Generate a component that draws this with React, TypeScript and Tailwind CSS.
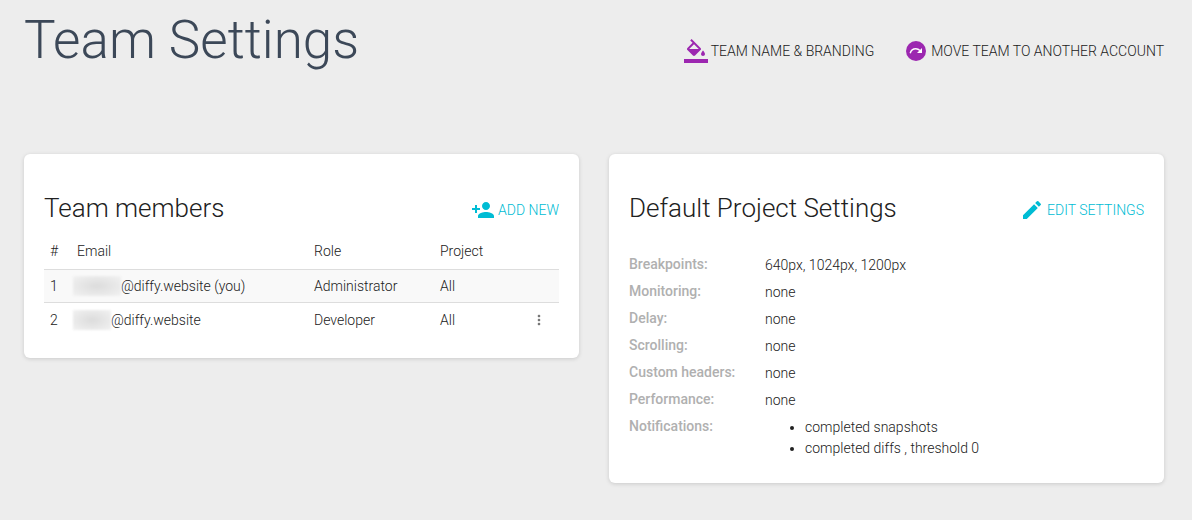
import type { ReactNode } from "react";
import { MdEdit, MdMoreVert, MdPersonAdd } from "react-icons/md";

type Member = { id: number; hidden: string; email: string; role: string; project: string; editable: boolean };

const members: Member[] = [
  { id: 1, hidden: "w-12", email: "@diffy.website (you)", role: "Administrator", project: "All", editable: false },
  { id: 2, hidden: "w-[38px]", email: "@diffy.website", role: "Developer", project: "All", editable: true },
];

const settings = [
  { label: "Breakpoints:", value: "640px, 1024px, 1200px" },
  { label: "Monitoring:", value: "none" },
  { label: "Delay:", value: "none" },
  { label: "Scrolling:", value: "none" },
  { label: "Custom headers:", value: "none" },
  { label: "Performance:", value: "none" },
];

const notifications = ["completed snapshots", "completed diffs , threshold 0"];

function FillIcon() {
  return (
    <svg viewBox="0 0 24 24" className="size-6 shrink-0 fill-[#9c27b0]" aria-hidden="true">
      <path d="M16.56 8.94L7.62 0 6.21 1.41l2.38 2.38-5.15 5.15c-.59.59-.59 1.54 0 2.12l5.5 5.5c.29.29.68.44 1.06.44s.77-.15 1.06-.44l5.5-5.5c.59-.58.59-1.53 0-2.12zM5.21 10L10 5.21 14.79 10H5.21zM19 11.5s-2 2.17-2 3.5c0 1.1.9 2 2 2s2-.9 2-2c0-1.33-2-3.5-2-3.5z" />
      <path d="M0 20h24v4H0z" />
    </svg>
  );
}

function MoveIcon() {
  return (
    <svg viewBox="0 0 24 24" className="size-6 shrink-0" aria-hidden="true">
      <circle cx="12" cy="12" r="10" fill="#9c27b0" />
      <path d="M6.2 14.2C7 11.2 9.2 9.8 11.8 9.8c1.7 0 3.1.7 4.2 1.8" fill="none" stroke="#fff" strokeWidth="1.4" />
      <path d="M18 9v5h-5z" fill="#fff" />
    </svg>
  );
}

function Card({ title, action, children }: { title: string; action: ReactNode; children: ReactNode }) {
  return (
    <section className="rounded-md bg-white px-5 pt-9 pb-5 shadow-[0_1px_4px_rgba(0,0,0,0.15)]">
      <div className="flex items-center justify-between">
        <h2 className="text-[26px] leading-9">{title}</h2>
        {action}
      </div>
      {children}
    </section>
  );
}

export default function App() {
  return (
    <main className="min-h-screen bg-[#ededed] px-6 pr-7 pb-9 font-['Roboto',sans-serif] text-sm font-light text-[#212121]">
      <header className="flex items-center justify-between pt-2">
        <h1 className="text-[53px] leading-[64px] text-[#3c4858]">Team Settings</h1>
        <nav className="flex gap-[30px] pt-[22px] uppercase">
          <a href="#branding" className="flex items-center gap-[3px]">
            <FillIcon />
            Team name &amp; branding
          </a>
          <a href="#move" className="flex items-center gap-[3px]">
            <MoveIcon />
            Move team to another account
          </a>
        </nav>
      </header>

      <div className="grid grid-cols-2 items-start gap-[30px] pt-[82px]">
        <Card
          title="Team members"
          action={
            <button className="flex items-center gap-[3px] pt-1 uppercase text-[#00bcd4]">
              <MdPersonAdd className="size-6" />
              Add new
            </button>
          }
        >
          <table className="mt-2 w-full table-fixed text-left">
            <thead>
              <tr className="h-[35px] border-b border-[#dddddd]">
                <th className="w-[27px] pl-1.5 font-light">#</th>
                <th className="w-[237px] pl-1.5 font-light">Email</th>
                <th className="w-[126px] pl-1.5 font-light">Role</th>
                <th className="pl-1.5 font-light">Project</th>
                <th className="w-10" aria-label="Actions" />
              </tr>
            </thead>
            <tbody>
              {members.map((m) => (
                <tr key={m.id} className={m.editable ? "h-9" : "h-[33px] border-b border-[#dddddd] bg-[#f9f9f9]"}>
                  <td className="pl-1.5">{m.id}</td>
                  <td>
                    <span className="flex items-center pl-0.5">
                      <span
                        className={`h-5 bg-radial from-[#dcdcdc] to-[#f2f2f2] blur-[1px] ${m.hidden}`}
                      />
                      {m.email}
                    </span>
                  </td>
                  <td className="pl-1.5">{m.role}</td>
                  <td className="pl-1.5">{m.project}</td>
                  <td>
                    {m.editable && (
                      <button aria-label="Member actions" className="mx-auto block text-[#757575]">
                        <MdMoreVert className="size-4" />
                      </button>
                    )}
                  </td>
                </tr>
              ))}
            </tbody>
          </table>
        </Card>

        <Card
          title="Default Project Settings"
          action={
            <button className="flex items-center gap-[3px] pt-1 uppercase text-[#00bcd4]">
              <MdEdit className="size-6" />
              Edit settings
            </button>
          }
        >
          <dl className="mt-7 grid grid-cols-[136px_1fr] gap-y-[5px] pb-1 leading-[21px]">
            {settings.map((s) => (
              <div key={s.label} className="contents">
                <dt className="font-medium text-[#b0b0b0]">{s.label}</dt>
                <dd className="pt-px">{s.value}</dd>
              </div>
            ))}
            <dt className="font-medium text-[#b0b0b0]">Notifications:</dt>
            <dd className="pt-px">
              <ul className="list-disc pl-10">
                {notifications.map((n) => (
                  <li key={n}>{n}</li>
                ))}
              </ul>
            </dd>
          </dl>
        </Card>
      </div>
    </main>
  );
}
